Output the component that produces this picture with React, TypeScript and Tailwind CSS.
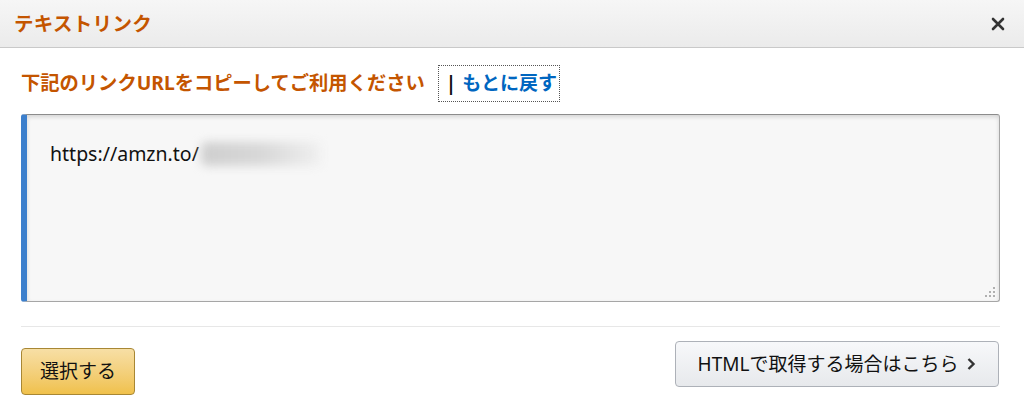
import type { FC } from 'react'

const font = { fontFamily: '"Noto Sans", "Noto Sans CJK JP", sans-serif' }

const CloseIcon: FC = () => (
  <svg width="14" height="14" viewBox="0 0 14 14" aria-hidden>
    <path d="M2 2 L12 12 M12 2 L2 12" stroke="#333" strokeWidth="2.6" strokeLinecap="round" />
  </svg>
)

const Chevron: FC = () => (
  <svg width="10" height="14" viewBox="0 0 10 14" aria-hidden>
    <path d="M2.5 2 L7.5 7 L2.5 12" fill="none" stroke="#333" strokeWidth="2.4" />
  </svg>
)

export default function App() {
  return (
    <div className="w-[1024px] h-[403px] bg-white overflow-hidden flex flex-col" style={font}>
      {/* Header */}
      <div className="h-[48px] shrink-0 flex items-center justify-between pl-[14px] pr-[19px] bg-gradient-to-b from-[#f6f6f6] to-[#ebebeb] border-b border-[#c9c9c9]">
        <span className="text-[19.5px] font-bold text-[#c45500] leading-none tracking-[0.3px]">テキストリンク</span>
        <CloseIcon />
      </div>

      <div className="flex flex-col px-[21px]">
        {/* Instruction */}
        <div className="h-[66px] flex items-center pt-[4px]">
          <span className="text-[19.3px] font-bold text-[#c45500] leading-none">
            下記のリンクURLをコピーしてご利用ください
          </span>
          <span className="ml-[13px] pl-[7px] pr-[2px] py-[8px] border border-dotted border-[#555] flex items-center gap-[6px] leading-none">
            <span className="text-[19px] font-bold text-[#111]">|</span>
            <span className="text-[19px] font-bold text-[#0066c0]">もとに戻す</span>
          </span>
        </div>

        {/* Textarea */}
        <div className="relative h-[188px] w-[979px] bg-[#f7f7f7] border border-[#a6a6a6] border-t-[#8c8c8c] border-l-[6px] border-l-[#3c7fcc] rounded-[3px] shadow-[inset_0_2px_4px_rgba(0,0,0,0.14)] pl-[23px] pt-[27px]">
          <div className="flex items-center">
            <span className="text-[19.5px] text-[#111] leading-none">https://amzn.to/</span>
            <span className="ml-[2px] w-[120px] h-[24px] bg-gradient-to-r from-[#cfcfcf] via-[#d8d8d8] to-[#f0f0f0] blur-[5px] rounded-[6px]" />
          </div>
          <svg className="absolute right-[3px] bottom-[3px]" width="11" height="11" viewBox="0 0 11 11" aria-hidden>
            <g fill="#b0b0b0">
              <rect x="8" y="0" width="2" height="2" />
              <rect x="4" y="4" width="2" height="2" />
              <rect x="8" y="4" width="2" height="2" />
              <rect x="0" y="8" width="2" height="2" />
              <rect x="4" y="8" width="2" height="2" />
              <rect x="8" y="8" width="2" height="2" />
            </g>
          </svg>
        </div>

        {/* Divider */}
        <div className="mt-[24px] h-px w-[979px] bg-[#e7e7e7]" />

        {/* Buttons */}
        <div className="mt-[14px] flex items-start justify-between w-[978px]">
          <button className="mt-[7px] w-[114px] h-[47px] rounded-[4px] border border-[#a88734] bg-gradient-to-b from-[#f7dfa5] to-[#f0c14b] text-[19px] text-[#111] leading-none">
            選択する
          </button>
          <button className="w-[324px] h-[46px] rounded-[4px] border border-[#adb1b8] bg-gradient-to-b from-[#f7f8fa] to-[#e7e9ec] flex items-center justify-center gap-[8px] text-[19px] text-[#111] leading-none">
            <span>HTMLで取得する場合はこちら</span>
            <Chevron />
          </button>
        </div>
      </div>
    </div>
  )
}
